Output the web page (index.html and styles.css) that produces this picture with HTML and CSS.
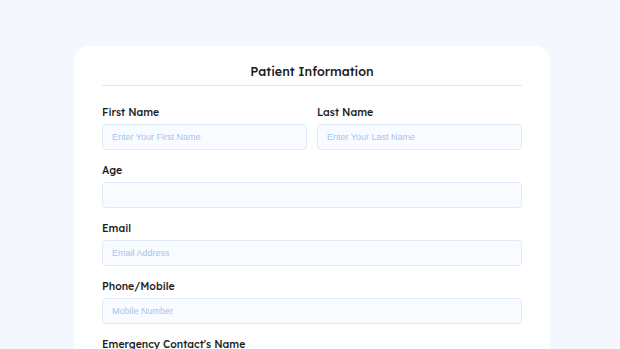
FILE: index.html
```html
<!DOCTYPE html>
<html lang="en">
<head>
    <meta charset="UTF-8">
    <meta name="viewport" content="width=device-width, initial-scale=1.0">
    <title>Patient Information</title>
    <link rel="stylesheet" href="styles.css">
</head>
<body>
    <div class="card">
        <h2 class="title">Patient Information</h2>
        <form class="patient-form">
            <div class="row">
                <div class="form-group">
                    <label for="first-name">First Name</label>
                    <input type="text" id="first-name" placeholder="Enter Your First Name">
                </div>
                <div class="form-group">
                    <label for="last-name">Last Name</label>
                    <input type="text" id="last-name" placeholder="Enter Your Last Name">
                </div>
            </div>
            <div class="form-group">
                <label for="age">Age</label>
                <input type="text" id="age">
            </div>
            <div class="form-group">
                <label for="email">Email</label>
                <input type="text" id="email" placeholder="Email Address">
            </div>
            <div class="form-group">
                <label for="phone">Phone/Mobile</label>
                <input type="text" id="phone" placeholder="Mobile Number">
            </div>
            <div class="form-group">
                <label for="contact">Emergency Contact's Name</label>
                <input type="text" id="contact" placeholder="Contact Name">
            </div>
        </form>
    </div>
</body>
</html>
```

FILE: styles.css
```css
body {
    font-family: "Lexend", "Inter", "Noto Sans", sans-serif;
    margin: 0;
    padding: 46px 0 0;
    background-color: #f4f7fd;
    height: 303px;
    overflow: hidden;
}
.card {
    width: 420px;
    margin-left: 74px;
    background-color: #fff;
    border-radius: 16px 16px 0 0;
    padding: 17px 28px 40px;
}
.title {
    margin: 0;
    font-size: 12.5px;
    line-height: 16px;
    font-weight: 500;
    color: #1c1c1c;
    text-align: center;
    padding-bottom: 6px;
    border-bottom: 1px solid #e3e6ec;
}
.patient-form {
    margin-top: 19px;
}
.row {
    display: flex;
    gap: 10px;
}
.row .form-group {
    flex: 1;
}
.form-group {
    margin-bottom: 13px;
}
label {
    display: block;
    margin-bottom: 5px;
    font-size: 10.5px;
    line-height: 14px;
    font-weight: 500;
    color: #1c1c1c;
}
input[type="text"] {
    display: block;
    width: 100%;
    height: 26px;
    padding: 0 9px;
    border: 1px solid #e1e9f8;
    border-radius: 4px;
    background-color: #f8fbff;
    box-sizing: border-box;
    font-family: "Liberation Sans", Arial, sans-serif;
    font-size: 9px;
}
input::placeholder {
    color: #a8c2f2;
}
```
